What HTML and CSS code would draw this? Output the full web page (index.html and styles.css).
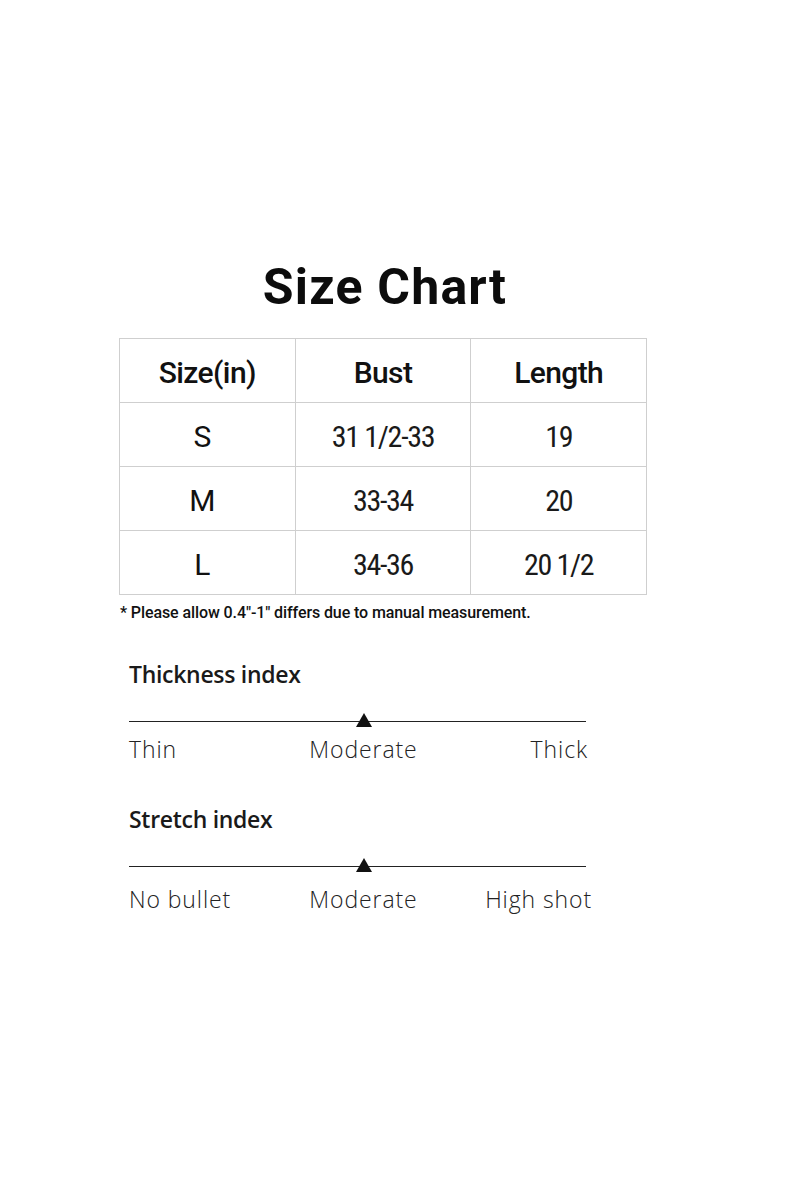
FILE: index.html
```html
<!DOCTYPE html>
<html lang="en">
<head>
<meta charset="utf-8">
<title>Size Chart</title>
<link rel="stylesheet" href="styles.css">
</head>
<body>
<main class="page">
  <h1 class="title">Size Chart</h1>
  <table class="chart">
    <thead>
      <tr><th>Size(in)</th><th>Bust</th><th>Length</th></tr>
    </thead>
    <tbody>
      <tr><td class="size">S</td><td class="num">31 1/2-33</td><td class="num">19</td></tr>
      <tr><td class="size">M</td><td class="num">33-34</td><td class="num">20</td></tr>
      <tr><td class="size">L</td><td class="num">34-36</td><td class="num">20 1/2</td></tr>
    </tbody>
  </table>
  <p class="note">* Please allow 0.4"-1" differs due to manual measurement.</p>

  <section class="index">
    <h2 class="index-title">Thickness index</h2>
    <div class="track"><span class="marker"></span></div>
    <div class="labels">
      <span class="lab-left">Thin</span>
      <span class="lab-mid">Moderate</span>
      <span class="lab-right">Thick</span>
    </div>
  </section>

  <section class="index index-second">
    <h2 class="index-title">Stretch index</h2>
    <div class="track"><span class="marker"></span></div>
    <div class="labels labels-low">
      <span class="lab-left">No bullet</span>
      <span class="lab-mid">Moderate</span>
      <span class="lab-right lab-right-wide">High shot</span>
    </div>
  </section>
</main>
</body>
</html>
```

FILE: styles.css
```css
* { box-sizing: border-box; }
html, body { margin: 0; padding: 0; background: #fff; }
body { width: 800px; height: 1200px; color: #111; }

.page {
  padding-top: 257px;
  display: flex;
  flex-direction: column;
}

.title {
  margin: 0;
  font-family: Roboto, "Liberation Sans", sans-serif;
  font-weight: 700;
  font-size: 50px;
  line-height: 60px;
  letter-spacing: 1.2px;
  text-align: center;
  width: 770px;
  color: #0c0c0c;
}

.chart {
  margin: 21px 0 0 119px;
  width: 528px;
  border-collapse: collapse;
  table-layout: fixed;
}
.chart th, .chart td {
  border: 1px solid #cfcfcf;
  height: 64px;
  text-align: center;
  vertical-align: middle;
  padding: 4px 0 0 0;
  color: #111;
}
.chart th {
  font-family: Roboto, "Liberation Sans", sans-serif;
  font-weight: 500;
  font-size: 30px;
  letter-spacing: -0.6px;
}
.chart td.size {
  font-family: Roboto, "Liberation Sans", sans-serif;
  font-weight: 400;
  font-size: 30px;
  padding-right: 10px;
}
.chart td.num {
  font-family: "Liberation Sans Narrow", "Roboto Condensed", "Liberation Sans", sans-serif;
  font-stretch: condensed;
  font-weight: 400;
  font-size: 30px;
  letter-spacing: -1.3px;
  color: #1a1a1a;
}

.note {
  margin: 8px 0 0 120px;
  font-family: Roboto, "Liberation Sans", sans-serif;
  font-weight: 500;
  font-size: 16px;
  letter-spacing: -0.1px;
  color: #111;
}

.index {
  margin: 37px 0 0 129px;
  width: 470px;
}
.index-second { margin-top: 39px; }

.index-title {
  margin: 0;
  font-family: "Open Sans", "Noto Sans", sans-serif;
  font-weight: 600;
  font-size: 23px;
  line-height: 30px;
  letter-spacing: -0.3px;
  color: #1a1a1a;
}

.track {
  position: relative;
  margin-top: 32px;
  width: 457px;
  height: 1px;
  background: #222;
}
.marker {
  position: absolute;
  left: 227px;
  top: -8px;
  width: 0;
  height: 0;
  border-left: 8px solid transparent;
  border-right: 8px solid transparent;
  border-bottom: 14px solid #111;
}

.labels {
  margin-top: 11px;
  display: grid;
  grid-template-columns: 1fr auto 1fr;
  width: 469px;
  font-family: "Open Sans", "Noto Sans", sans-serif;
  font-weight: 300;
  font-size: 23px;
  line-height: 32px;
  letter-spacing: 0.9px;
  color: #222;
}
.labels-low { margin-top: 16px; }
.lab-left { justify-self: start; }
.lab-mid { justify-self: center; }
.lab-right { justify-self: end; padding-right: 10px; }
.lab-right-wide { padding-right: 6px; }
```
